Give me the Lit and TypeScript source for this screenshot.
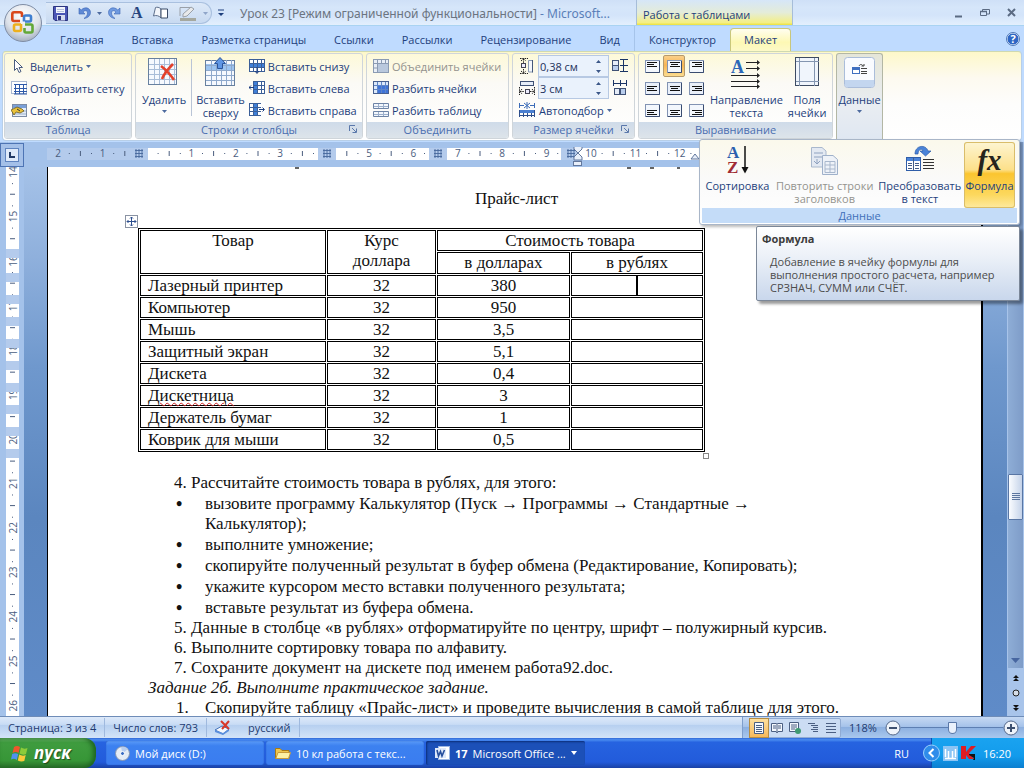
import { LitElement, html, css, svg } from "lit";
import { customElement, state } from "lit/decorators.js";

const cell = (x: number, y: number, w: number, h: number, f: string) =>
  svg`<rect x=${x} y=${y} width=${w} height=${h} fill=${f} />`;

const gridLines = (w: number, h: number, sx: number, sy: number, c: string) => {
  let d = "";
  for (let x = sx; x < w; x += sx) d += `M${x + 0.5} 0V${h}`;
  for (let y = sy; y < h; y += sy) d += `M0 ${y + 0.5}H${w}`;
  return svg`<path d=${d} stroke=${c} fill="none" />`;
};

const smallTable = (blue: unknown, extra: unknown = "", line = "#6f86a8") => html`
  <svg width="16" height="16" viewBox="0 0 16 16" aria-hidden="true">
    <rect x="0.5" y="1.5" width="15" height="12" fill="#fff" stroke=${line} />
    ${blue}
    <path d="M4.5 2V13M8.5 2V13M12.5 2V13M1 5.5H15M1 9.5H15" stroke=${line} fill="none" />
    ${extra}
  </svg>`;

const icons = {
  save: html`<svg width="15" height="15" viewBox="0 0 15 15" aria-hidden="true"><path d="M.5.5H14.5V14.5H2L.5 13Z" fill="#4a55b5" stroke="#2c3580"/><rect x="3" y="1" width="9" height="6" fill="#f2f5fc"/><path d="M4 3.500H11M4 5.500H11" stroke="#b6c0dc"/><rect x="4" y="9" width="8" height="5.500" fill="#d4daee"/><rect x="5" y="10" width="3" height="4" fill="#2c3580"/></svg>`,
  undo: html`<svg width="13" height="14" viewBox="0 0 13 14" aria-hidden="true"><path d="M1 2V8H7L5 6C7 3.800 9.500 4.500 9.500 7C9.500 9.500 8 11 6 12.500C10 12 12.500 9.500 12.500 6.500C12.500 2 7 0 3.200 4Z" fill="#5f8ad6" stroke="#3c64b4" stroke-width=".6"/></svg>`,
  redo: html`<svg width="13" height="14" viewBox="0 0 13 14" aria-hidden="true"><path d="M12 2V8H6L8 6C6 3.800 3.500 4.500 3.500 7C3.500 9.500 5 11 7 12.500C3 12 .5 9.500 .5 6.500C.5 2 6 0 9.800 4Z" fill="#6f9ae0" stroke="#3c64b4" stroke-width=".6"/></svg>`,
  book: html`<svg width="16" height="14" viewBox="0 0 16 14" aria-hidden="true"><path d="M8 3C6 1 4 1 2.500 1.500L.5 10C3 9 6 9.500 8 12Z" fill="#f2f5fa" stroke="#5d6f8c"/><path d="M8 3H14.500V12H8Z" fill="#fff" stroke="#3b4c68"/></svg>`,
  pen: html`<svg width="18" height="16" viewBox="0 0 18 16" aria-hidden="true"><path d="M1 2.500H11M1 2.500V11M4 9L12 2L15 4L8 11L4 12Z" fill="#e8e9ea" stroke="#9aa0a8"/><rect x="1" y="13" width="16" height="3" fill="#a5a89f"/></svg>`,
  cursor: html`<svg width="16" height="16" viewBox="0 0 16 16" aria-hidden="true"><path d="M3.500 1.500V12.500L6 10L8 14.500L10 13.500L8 9.500H11.500Z" fill="#fff" stroke="#4a5d80"/></svg>`,
  gridView: html`<svg width="16" height="14" viewBox="0 0 16 14" aria-hidden="true"><rect x=".5" y=".5" width="15" height="12" fill="#fff" stroke="#5674a8" stroke-dasharray="1 1"/><path d="M4.500 3V13M8.500 3V13M12.500 3V13M3 3.500H16M3 7.500H16M3 10.500H16M3 13H16" stroke="#2e59a8" fill="none"/></svg>`,
  props: html`<svg width="16" height="14" viewBox="0 0 16 14" aria-hidden="true"><rect x="1.500" y="1.500" width="14" height="12" fill="#e6eef8" stroke="#7c8ca6"/><rect x="2" y="2" width="13" height="3" fill="#7aa0d8"/><path d="M2 8H15M2 11H15" stroke="#9bb0cc"/><path d="M0 7L6 4L11 6L13 8L9 10L5 9L3 12Z" fill="#eac23a" stroke="#6a5a20" stroke-width=".8"/><path d="M6 6L9 8" stroke="#333"/></svg>`,
  remove: html`<svg width="32" height="30" viewBox="0 0 32 30" aria-hidden="true"><rect x=".5" y="1.500" width="28" height="26" fill="#f6f9fe" stroke="#67809f"/><g transform="translate(1 2)">${gridLines(27, 25, 5, 5, "#a9bdd8")}</g><path d="M13 9C17 12 22 17 26 23M25 7C20 12 16 17 14 22" stroke="#e2412c" stroke-width="2.600" fill="none"/></svg>`,
  insertAbove: html`<svg width="32" height="30" viewBox="0 0 32 30" aria-hidden="true"><rect x=".5" y="3.500" width="29" height="25" fill="#f6f9fe" stroke="#67809f"/><rect x="1" y="7" width="28" height="6" fill="#9cc4f0"/><g transform="translate(1 3)">${gridLines(28, 25, 5, 5, "#8fa9cc")}</g><path d="M15 .5L20.500 6.500H17.500V11.500H12.500V6.500H9.500Z" fill="#5f96e4" stroke="#2a559c"/></svg>`,
  below: smallTable(cell(1, 6, 14, 4, "#3f7fd8"), svg`<path d="M8 9V15M6 13L8 15.500L10 13" stroke="#1d3f80" fill="none"/>`, "#3b5f98"),
  left: smallTable(cell(5, 2, 4, 11, "#3f7fd8"), svg`<rect x="0" y="0" width="4" height="16" fill="#fdfcf6"/><path d="M5 7.500H0M2 5.500L0 7.500L2 9.500" stroke="#1d3f80" fill="none"/>`, "#3b5f98"),
  right: smallTable(cell(5, 2, 4, 11, "#3f7fd8"), svg`<rect x="12" y="0" width="4" height="16" fill="#fdfdfd"/><path d="M10 7.500H15M13.500 5.500L15.500 7.500L13.500 9.500" stroke="#1d3f80" fill="none"/>`, "#3b5f98"),
  merge: html`<svg width="16" height="14" viewBox="0 0 16 14" aria-hidden="true"><rect x=".5" y=".5" width="15" height="13" fill="#e8eef6" stroke="#8b9bb3"/><path d="M.5 4.500H15M4.500 .5V13M8.500 .5V4M12.500 .5V4M1 9H4" stroke="#8b9bb3"/><rect x="5" y="5" width="10" height="8" fill="#b9c8dd"/></svg>`,
  split: html`<svg width="16" height="14" viewBox="0 0 16 14" aria-hidden="true"><rect x=".5" y=".5" width="15" height="12" fill="#dce9fa" stroke="#476090"/><rect x="4" y="4" width="11" height="8" fill="#3f74d8"/><path d="M4.500 1V12M8.500 1V12M12.500 1V12M1 4.500H15M1 8.500H15" stroke="#5f86c8"/></svg>`,
  splitTable: html`<svg width="16" height="16" viewBox="0 0 16 16" aria-hidden="true"><path d="M.5 1.500H15.500V6.500H.5ZM.5 9.500H15.500V14.500H.5Z" fill="#f3f7fc" stroke="#6e84a6"/><path d="M5.500 2V6M10.500 2V6M5.500 10V14M10.500 10V14M1 4.500H15M1 12.500H15" stroke="#9db0cc"/></svg>`,
  rowH: html`<svg width="16" height="16" viewBox="0 0 16 16" aria-hidden="true"><path d="M1 .5H9M1 15.500H9M4.500 1V5M4.500 11V15M2 3L4.500 .8L7 3M2 13L4.500 15.200L7 13" stroke="#222" stroke-dasharray="1.500 .8" fill="none"/><rect x="2.500" y="5.500" width="4" height="4" fill="#eef" stroke="#445"/><path d="M9.500 2.500H13.500V14H9.500Z" fill="#f4f7fc" stroke="#8a9ab4"/><path d="M13.500 2V14.500" stroke="#44587a"/></svg>`,
  colW: html`<svg width="16" height="16" viewBox="0 0 16 16" aria-hidden="true"><rect x="1.500" y="1.500" width="13" height="4" fill="#e6edf8" stroke="#3f5175"/><path d="M.5 7V15M15.500 7V15M1 11.500H5M11 11.500H15M3 9L1 11.500L3 14M13 9L15 11.500L13 14" stroke="#222" stroke-dasharray="1.500 .8" fill="none"/><rect x="6.500" y="9.500" width="4" height="4" fill="#eef" stroke="#445"/></svg>`,
  distRows: html`<svg width="16" height="16" viewBox="0 0 16 16" aria-hidden="true"><rect x=".5" y="2.500" width="6" height="5" fill="#e6edf8" stroke="#3f5175"/><rect x=".5" y="7.500" width="6" height="5" fill="#b9cdec" stroke="#3f5175"/><path d="M8 1.500H16M8 7.500H16M8 13.500H16M11.500 1V14" stroke="#1b3566"/></svg>`,
  distCols: html`<svg width="16" height="16" viewBox="0 0 16 16" aria-hidden="true"><path d="M1.500 0V6M8.500 0V6M14.500 0V6M1 3.500H15" stroke="#1b3566"/><rect x="2.500" y="8.500" width="5" height="6" fill="#e6edf8" stroke="#3f5175"/><rect x="8.500" y="8.500" width="5" height="6" fill="#b9cdec" stroke="#3f5175"/></svg>`,
  autofit: html`<svg width="17" height="16" viewBox="0 0 17 16" aria-hidden="true"><path d="M.5 1V6M15.500 1V6M1 3.500H5M11 3.500H15M8 0V7M5 1L11 6M11 1L5 6" stroke="#3c6cb8" fill="none"/><rect x=".5" y="8" width="15" height="3" fill="#4b7fd0"/><path d="M.5 8V15M4.500 11V15M8.500 11V15M12.500 11V15M15.500 8V15M0 13.500H16" stroke="#2e4f8c"/></svg>`,
  direction: html`<svg width="32" height="32" viewBox="0 0 32 32" aria-hidden="true"><text x="1" y="16" font-family="Liberation Serif, serif" font-weight="bold" font-size="18" fill="#2b67b8">A</text><path d="M16 5.500H29M16 11.500H29M1 18.500H29M1 24.500H29M1 29.500H29" stroke="#222" fill="none"/><path d="M27 3L30 5.500L27 8ZM27 9L30 11.500L27 14ZM27 16L30 18.500L27 21ZM27 22L30 24.500L27 27ZM27 27L30 29.500L27 32Z" fill="#222"/></svg>`,
  margins: html`<svg width="25" height="30" viewBox="0 0 25 30" aria-hidden="true"><rect x=".5" y=".5" width="23" height="28" fill="#f0f5fc" stroke="#3d4b63"/><path d="M4.500 1V29M19.500 1V29M1 4.500H24M1 24.500H24" stroke="#8395b0"/></svg>`,
  data: html`<svg width="32" height="32" viewBox="0 0 32 32" aria-hidden="true"><rect x=".5" y=".5" width="30" height="30" rx="3" fill="#f9fbff" stroke="#aabdda"/><path d="M1 23H30V28Q30 30 28 30H3Q1 30 1 28Z" fill="#c3d6ef"/><rect x="8.500" y="10.500" width="7" height="6" fill="#fff" stroke="#3f6fc0"/><path d="M9 12H15" stroke="#3f6fc0" stroke-width="2"/><path d="M15 9C16 7 18 7 19 9M17.500 9H20V7M17 11.500H23M17 14.500H23M17 16.500H23" stroke="#444" fill="none"/></svg>`,
  sort: html`<svg width="24" height="32" viewBox="0 0 24 32" aria-hidden="true"><text x="1" y="15" font-family="Liberation Serif, serif" font-weight="bold" font-size="17" fill="#2b5fae">A</text><text x="1" y="30" font-family="Liberation Serif, serif" font-weight="bold" font-size="17" fill="#a02c34">Z</text><path d="M19 3V26" stroke="#111" stroke-width="1.500"/><path d="M15.500 24L19 30.500L22.500 24Z" fill="#111"/></svg>`,
  repeat: html`<svg width="30" height="33" viewBox="0 -3 30 33" aria-hidden="true"><path d="M1.500 1.500H12L16 5V21H1.500Z" fill="#e3e9f2" stroke="#a9b8cd"/><path d="M4 7H13M4 11H13M7 13V17M4 15L7 18L10 15" stroke="#8fa2bf" fill="none"/><path d="M12.500 9.500H23L27.500 13.500V28.500H12.500Z" fill="#eef2f8" stroke="#9fb1ca"/><path d="M15 15.500H25V26.500H15ZM15 19H25M15 23H25M20 16V26" stroke="#a9b8cd" fill="none"/></svg>`,
  convert: html`<svg width="30" height="30" viewBox="0 -2 30 30" aria-hidden="true"><path d="M10 9C10 0 21 -1 23 6H26L20.500 11L15 6H18C17 3 13 4 13 9Z" fill="#4a83d8" stroke="#2a5aa8" stroke-width=".7"/><rect x="1.500" y="12.500" width="14" height="13" fill="#fff" stroke="#2f5da8"/><path d="M2 13H15V16H2Z" fill="#4a83d8"/><path d="M3 18.500H7M3 20.500H7M3 23.500H7M10 18.500H14M10 20.500H14M10 23.500H14M8.500 13V25" stroke="#445d88"/><path d="M18 14.500H29M18 17.500H29M18 20.500H29M18 23.500H29" stroke="#333"/></svg>`,
  launcher: html`<svg width="8" height="8" viewBox="0 0 8 8" aria-hidden="true"><path d="M.5 6V.5H6M3 3L7 7M7.500 3.500V7.500H3.500" stroke="#5a78ab" fill="none"/></svg>`,
  caret: html`<svg width="5" height="3" viewBox="0 0 5 3" aria-hidden="true"><path d="M0 0H5L2.500 3Z" fill="#4d6a9e"/></svg>`,
};

const TABS = ["Главная", "Вставка", "Разметка страницы", "Ссылки", "Рассылки", "Рецензирование", "Вид"];

const ROWS = [
  ["Лазерный принтер", "380"],
  ["Компьютер", "950"],
  ["Мышь", "3,5"],
  ["Защитный экран", "5,1"],
  ["Дискета", "0,4"],
  ["Дискетница", "3"],
  ["Держатель бумаг", "1"],
  ["Коврик для мыши", "0,5"],
];

@customElement("app-root")
export class AppRoot extends LitElement {
  @state() private align = 1;

  static styles = css`
    :host {
      display: grid;
      grid-template-rows: 26px 25px 91px minmax(0, 1fr) 22px 30px;
      height: 100vh;
      position: relative;
      overflow: hidden;
      background: #bfdbff;
      color: #1e3f7c;
      font: 11px/13px "Open Sans", "Noto Sans", sans-serif;
    }
    * { box-sizing: border-box; }
    button {
      font: inherit; color: inherit; background: none; border: 0; padding: 0; margin: 0;
      display: flex; align-items: center; white-space: nowrap;
    }
    svg { display: block; flex: none; }

    .title {
      display: flex; align-items: stretch; padding-left: 46px;
      background: linear-gradient(#cfe0f7, #d6e6fa 30%, #d3e4fa 60%, #e3effd);
      border-bottom: 1px solid #a9d3f2;
    }
    .quick {
      display: flex; align-items: center; gap: 10px; height: 22px; margin-top: 2px; padding: 0 9px 0 7px;
      background: linear-gradient(#dde9f8, #c8daf1); border: 1px solid #a9c0df; border-left: 0;
      border-radius: 0 11px 11px 0; width: 166px; flex: none;
    }
    .quick .fontA { font: bold 16px/18px "Liberation Serif", serif; color: #27457e; }
    .quick .more { margin: 0 -4px; }
    .quick .dim { opacity: 0.5; }
    .qmenu { padding: 0 6px; }
    .caption { flex: 0 1 406px; font-family: "Noto Sans", sans-serif; font-size: 12px; line-height: 28px; color: #5a7fb8; white-space: nowrap; padding-left: 10px; }
    .caption span { color: #6b7480; }
    .context {
      width: 157px; padding-left: 6px; line-height: 29px; color: #1e3f7c;
      background: linear-gradient(#d6e6f8, #e4ecd9 50%, #f4ef86 90%, #ece13c);
      border-left: 1px solid #a6bdd9; border-right: 1px solid #a6bdd9;
      font-size: 11px; white-space: nowrap;
    }
    .winctl { margin-left: auto; display: flex; gap: 17px; padding-right: 8px; }
    .orb { position: absolute; left: 3px; top: 3px; z-index: 3; }

    .tabs { display: flex; padding-left: 46px; align-items: stretch; background: #bfdbff; }
    .tabs button { padding: 2px 14px 0; line-height: 20px; }
    .tabs .ctx { border-left: 1px solid #a6c4ea; }
    .tabs .on {
      margin-top: 2px; padding: 0 13px; border: 1px solid #c9c77c; border-bottom: 0; border-radius: 4px 4px 0 0;
      background: linear-gradient(#fffef0, #fdf8b4 60%, #fdf9c8);
    }
    .help { margin-left: auto; padding: 0 4px 0 0 !important; }

    .ribbon {
      display: grid; grid-template-columns: 128px 228px 143px 123px 195px 47px; gap: 3px;
      margin: 0 2px; padding: 1px; background: linear-gradient(#fdf8c9, #fdfaf0 30%, #fdfdfc 60%, #fff);
      border: 1px solid #b8cfe8; border-top-color: #cfd9b0; border-radius: 4px; height: 90px;
    }
    .group {
      display: grid; grid-template-rows: 68px 16px; border: 1px solid #cfd5da; border-radius: 3px; overflow: hidden; height: 86px;
      background: linear-gradient(#fdf9d8, #fbfaf6 35%, #fff);
    }
    .group footer {
      display: flex; align-items: center; justify-content: center; background: linear-gradient(#cfdbe9, #dde4ea);
      color: #4a6eb0; position: relative; white-space: nowrap; padding-bottom: 1px;
    }
    .group footer button { position: absolute; right: 5px; top: 3px; }
    .body { display: flex; padding: 1px 4px 0 6px; }
    .col { display: grid; grid-template-rows: repeat(3, 22px); }
    .col button { gap: 3px; }
    .col.after { margin-left: 4px; }
    .off { color: #94938e; }
    .big { flex-direction: column; text-align: center; padding-top: 2px; line-height: 13px; white-space: normal; }
    .big .pic { height: 35px; display: flex; align-items: flex-start; }
    .big .pic + span { padding-top: 1px; }
    .big .caret { padding-top: 4px; }
    .rule { width: 1px; margin: 4px 4px 6px 5px; background: #b9c4d6; }
    .size { display: grid; grid-template-columns: 16px 71px 16px; grid-template-rows: repeat(3, 22px); column-gap: 3px; align-items: center; }
    .size .fit { grid-column: 1 / 4; gap: 3px; }
    .spin { display: flex; height: 22px; border: 1px solid #b7c9e3; background: #eaf2fc; }
    .spin input { width: 52px; border: 0; background: none; font: inherit; color: #1a2f5a; padding: 0 0 0 1px; outline: 0; }
    .spin button { width: 15px; justify-content: center; }
    .aligns { display: grid; grid-template: repeat(3, 22px) / repeat(3, 22px); margin-left: -4px; }
    .aligns button { justify-content: center; }
    .aligns .on { background: linear-gradient(#fbd08a, #f7b553 45%, #fbdc8f); border: 1px solid #b59a6c; border-radius: 2px; }
    .pair { display: flex; gap: 5px; margin-left: 3px; }
    .data { border: 1px solid #b3b7a5; border-bottom: 0; border-radius: 3px 3px 0 0; background: linear-gradient(#e5e6d8, #e9edf2 60%, #dfe7f2); padding-top: 3px; height: 87px; }

    .menu {
      position: absolute; z-index: 4; top: 139px; right: 4px; width: 321px; height: 86px; padding: 2px;
      border: 1px solid #a9b6c8; border-radius: 3px; background: linear-gradient(#fbf9ec, #fafafa 50%, #fff);
      box-shadow: 2px 2px 3px #0004; display: grid; grid-template-rows: 66px 15px;
    }
    .items { display: grid; grid-template-columns: 71px 102px 87px 51px; justify-content: space-between; padding-right: 2px; }
    .items .big { padding-top: 1px; white-space: nowrap; }
    .items .on { background: linear-gradient(#fdf5d2, #fde08a 42%, #fbc530 48%, #fcd85e 80%, #feeaa0); box-shadow: inset 0 0 0 1px #d9bd6a; border-radius: 3px; }
    .fx { font: italic bold 29px/35px "Liberation Serif", serif; color: #26241c; }
    .menu footer { background: #c4dcf8; color: #3f6fb8; text-align: center; line-height: 15px; }
    .tip {
      position: absolute; z-index: 4; top: 226px; right: 4px; width: 264px; height: 75px; padding: 5px;
      border: 1px solid #7b8798; border-radius: 2px; background: linear-gradient(#fff, #ecf1f8 40%, #c9d7ec); color: #4c4c4c;
      box-shadow: 3px 3px 3px #0006;
    }
    .tip b { display: block; color: #3c3c3c; margin-bottom: 10px; line-height: 13px; }
    .tip p { margin: 0 0 0 8px; white-space: nowrap; }

    .work { display: grid; grid-template-columns: 24px minmax(0, 1fr) 17px; background: #a4c2ea; overflow: hidden; }
    .vr { background: #a4c2ea; }
    .tabsel { display: flex; width: 24px; height: 24px; border: 1px solid #4d74b4; background: #a4c0e8; align-items: center; justify-content: center; margin-top: 1px; }
    .tabsel span { width: 14px; height: 14px; border: 1px solid #5f84bf; background: #dfeafa; display: grid; place-items: center; }
    .main { display: grid; grid-template-rows: 25px minmax(0, 1fr); }
    .hr { padding: 5px 0 0 23px; background: #a4c2ea; overflow: hidden; }
    .desk { padding: 0 24px 0 23px; background: linear-gradient(#a5c2e8 0, #8fb0dc 90px, #6f98cd 200px, #5b86bf 350px, #5f8bc8 100%); overflow: hidden; }
    .page { position: relative; background: #fff; border: solid #000; border-width: 0 2px 0 1px; height: 100%; color: #111; font: 17px/20px "Liberation Serif", serif; padding-top: 22px; overflow: hidden; }
    .marks { position: absolute; top: 0; left: 0; }
    h1 { font: inherit; text-align: center; margin: 0 0 19px; padding-left: 4px; }
    table { margin-left: 90px; width: 567px; table-layout: fixed; border: 1px solid #000; border-collapse: separate; border-spacing: 1px; }
    th, td { border: 1px solid #000; font-weight: normal; padding: 0 7px; text-align: center; height: 21px; line-height: 19px; vertical-align: top; }
    .r1 th { line-height: 19px; }
    .r1 th[rowspan] { line-height: 20px; }
    .r2 th { line-height: 20px; }
    .name { text-align: left; }
    .bad { text-decoration: underline wavy #c22 1px; text-underline-offset: 1px; }
    .caret-bar { display: inline-block; width: 2px; height: 19px; background: #000; vertical-align: top; }
    .handle { position: absolute; left: 77px; top: 48px; }
    .corner { position: absolute; left: 655px; top: 286px; width: 6px; height: 6px; border: 1px solid #888; background: #fff; }
    .doc { margin: 21px 0 0 100px; }
    .doc p { margin: 0; white-space: nowrap; }
    .in { padding-left: 26px; }
    ul, ol { list-style: none; margin: 0; padding: 0; }
    li { display: grid; grid-template-columns: 29px 1fr; padding-left: 28px; white-space: nowrap; }
    ul li { margin-top: 1px; }
    .dot { font-size: 18px; font-weight: bold; }

    .scroll { background: #a8c4ea; display: grid; grid-template-rows: 332px 46px 1fr 50px; padding: 0 1px; }
    .track { background: linear-gradient(90deg, #8eadd6, #7e9cc8); display: flex; justify-content: center; align-items: flex-end; padding-bottom: 5px; }
    .thumb { background: linear-gradient(90deg, #fafcff, #c5d3e9); border: 1px solid #5976a4; border-radius: 1px; justify-content: center; }
    .browse { display: grid; justify-items: center; align-content: space-evenly; }

    .status {
      display: flex; align-items: center; background: linear-gradient(#dde9f9, #c9dcf5 35%, #b7d0f0 40%, #d3e4f8);
      border-top: 1px solid #6e8cb8; color: #1e3b70; white-space: nowrap;
    }
    .status > span { padding: 0 8px; border-right: 1px solid #9fb9de; line-height: 19px; }
    .status .proof { display: flex; align-items: center; gap: 17px; height: 19px; }
    .right { margin-left: auto; align-self: stretch; width: 282px; display: flex; align-items: center; padding-left: 6px; background: linear-gradient(#c6d9f3, #a6c3ea 45%, #8db0e0 50%, #a9c8ee); border-left: 1px solid #7f9ecb; }
    .views { display: flex; border: 1px solid #90abd3; border-radius: 2px; background: #cbdcf3; }
    .views button { width: 18px; height: 18px; justify-content: center; }
    .views .on { background: linear-gradient(#fde0a0, #f7b95a); box-shadow: 0 0 0 1px #b58d45; }
    .pct { margin: 0 8px; width: 28px; }
    input[type="range"] { appearance: none; width: 102px; height: 16px; margin: 0; background: linear-gradient(#5d7fb2, #5d7fb2) center / 100% 1px no-repeat; }
    input[type="range"]::-webkit-slider-thumb { appearance: none; width: 9px; height: 12px; border: 1px solid #5a78a8; background: #e9f1fc; border-radius: 1px 1px 5px 5px; }

    .task { display: flex; align-items: stretch; gap: 2px; background: linear-gradient(#3168d5, #4a8cf0 6%, #2663e0 14%, #225bdb 80%, #1941a5); color: #fff; }
    .start { width: 96px; margin-right: 8px; padding-left: 11px; gap: 6px; font: italic bold 17px/28px "Open Sans", sans-serif; text-shadow: 1px 1px 1px #0007; border-radius: 0 12px 12px 0; background: linear-gradient(#6db56b, #3f9c3f 15%, #379637 75%, #2a6f2a); box-shadow: inset -3px 0 5px #1d6320; }
    .app { flex: 0 0 158px; margin: 3px 0; padding: 0 8px 0 9px; gap: 5px; border-radius: 2px; background: linear-gradient(#5a9af8, #3c81f0 20%, #3a7cf0); box-shadow: inset 0 0 1px #16409b; }
    .app.on { background: #1c50b8; box-shadow: inset 1px 1px 2px #0b2d78; }
    .app svg:last-child:not(:first-child) { margin-left: auto; }
    .lang { margin-left: auto; margin-right: 20px; align-self: center; }
    .tray { display: flex; align-items: center; gap: 3px; width: 93px; background: linear-gradient(#1aa3f0, #129bec 60%, #0c7fd0); border-left: 1px solid #0c4fb0; }
    .tray time { margin-left: 4px; }
    .tray button { margin-left: -9px; }
  `;

  private big(icon: unknown, label: unknown, caret = false, cls = "") {
    return html`<button class="big ${cls}"><span class="pic">${icon}</span><span>${label}</span>${caret ? html`<span class="caret">${icons.caret}</span>` : ""}</button>`;
  }

  private row(icon: unknown, label: string, caret = false, off = false) {
    return html`<button class=${off ? "off" : ""}>${icon}<span>${label}</span>${caret ? icons.caret : ""}</button>`;
  }

  private alignIcon(i: number) {
    const h = i % 3, v = Math.floor(i / 3);
    const y = 2 + v * 2;
    const w = [10, 7, 10];
    return html`<svg width="15" height="13" viewBox="0 0 15 13" aria-hidden="true">
      <rect x=".5" y=".5" width="14" height="12" fill=${v === 1 ? "#e9eff9" : "#f3f7fd"} stroke="#8293b3" />
      <path d="M1 12.500H14.500V1" stroke="#3a4c70" fill="none" />
      ${w.map((n, k) => {
        const x = h === 0 ? 2 : h === 1 ? (15 - n) / 2 : 13 - n;
        return svg`<rect x=${Math.round(x)} y=${y + k * 2} width=${n} height="1" fill="#111" />`;
      })}
    </svg>`;
  }

  private hash(x: number) {
    return svg`<path d="M${x - 3} 2V11M${x} 2V11M${x + 3} 2V11M${x - 4} 3.500H${x + 4}M${x - 4} 6.500H${x + 4}M${x - 4} 9.500H${x + 4}" stroke="#46689c" stroke-width=".9" />`;
  }

  private horizontalRuler() {
    const unit = 44.4, zero = 100;
    const marks = [];
    const blocked = [92, 280, 391, 524];
    for (let q = -8; q <= 78; q++) {
      const x = zero + (q * unit) / 4;
      if (x < 6 || blocked.some((b) => Math.abs(b - x) < 10)) continue;
      if (q % 4 === 0) marks.push(svg`<text x=${x} y="10" text-anchor="middle">${Math.abs(q / 4)}</text>`);
      else if (q % 2 === 0) marks.push(svg`<path d="M${x} 4V9" stroke="#4a5d7e" />`);
      else marks.push(svg`<rect x=${x - 0.5} y="6" width="1" height="1" fill="#4a5d7e" />`);
    }
    return html`<svg width="100%" height="20" font-size="10" font-family="Open Sans, sans-serif" fill="#4a5d7e" aria-hidden="true">
      <rect width="100%" height="12" y="1" fill="#fff" />
      <rect width="101" height="12" y="1" fill="#b4cbec" />
      ${[271, 382, 514].map((x) => svg`<rect x=${x} y="1" width="18" height="12" fill="#b4cbec" />`)}
      ${blocked.map((x) => this.hash(x))}
      ${marks}
      <path d="M527 -2H535V2L531 6L535 10V13H527V10L531 6L527 2Z" fill="#e8effa" stroke="#62779c" />
      <rect x="526.500" y="14.500" width="8" height="4" fill="#e8effa" stroke="#62779c" />
      <path d="M644 12L648 7L652 12Z" fill="#e8effa" stroke="#62779c" />
    </svg>`;
  }

  private verticalRuler() {
    const marks = [];
    for (let q = 0; q < 50; q++) {
      const y = 5 + q * 11.12;
      const n = 14 + q / 4;
      if (q % 4 === 0) marks.push(svg`<text transform="translate(17 ${y}) rotate(-90)" text-anchor="middle">${n}</text>`);
      else if (q % 2 === 0) marks.push(svg`<path d="M10 ${y}H15" stroke="#4a5d7e" />`);
      else marks.push(svg`<rect x="12" y=${y} width="1" height="1" fill="#4a5d7e" />`);
    }
    return html`<svg width="24" height="550" font-size="10" font-family="Open Sans, sans-serif" fill="#4a5d7e" aria-hidden="true">
      <rect x="6" width="13" height="550" fill="#fff" />
      ${marks}
      ${[82, 106, 128, 150, 172, 194, 216, 238, 260, 282].map((y) => svg`<rect x="6" y=${y} width="13" height="9" fill="#b4cbec" />`)}
    </svg>`;
  }

  render() {
    return html`
      <svg class="orb" width="40" height="40" viewBox="0 0 40 40" aria-hidden="true">
        <defs><radialGradient id="o" cx=".5" cy=".3" r=".75"><stop offset="0" stop-color="#fff" /><stop offset=".6" stop-color="#dde2ea" /><stop offset="1" stop-color="#9aa6b8" /></radialGradient></defs>
        <circle cx="20" cy="20" r="18.500" fill="url(#o)" stroke="#7f8da5" />
        <g fill="none" stroke-width="2.600">
          <path d="M17 18H11Q9.300 18 9.300 16V11Q9.300 9.300 11 9.300H17Q19 9.300 19 11V14" stroke="#d9481c" />
          <path d="M21 18.500V14Q21 12.500 22.500 12.500H26.500Q28 12.500 28 14V17Q28 18.500 26.500 18.500H22" stroke="#3f7fd0" />
          <path d="M18 21V26.500Q18 28 16.500 28H12.500Q11 28 11 26.500V23Q11 21.500 12.500 21.500H18" stroke="#edb01d" />
          <path d="M21.500 25V28Q21.500 29.500 23 29.500H28Q29.500 29.500 29.500 28V23Q29.500 21.500 28 21.500H22" stroke="#62a838" />
        </g>
      </svg>

      <header class="title">
        <div class="quick">
          <button aria-label="Сохранить">${icons.save}</button>
          <button aria-label="Отменить">${icons.undo}</button>
          <span class="more">${icons.caret}</span>
          <button aria-label="Повторить">${icons.redo}</button>
          <button class="fontA">A</button>
          <button aria-label="Справочник">${icons.book}</button>
          <button aria-label="Перо">${icons.pen}</button>
          <span class="more dim">${icons.caret}</span>
        </div>
        <button class="qmenu" aria-label="Настройка"><svg width="6" height="8" viewBox="0 0 6 8"><path d="M0 1H6" stroke="#1e3f7c" /><path d="M0 4H6L3 7Z" fill="#1e3f7c" /></svg></button>
        <div class="caption"><span>Урок 23 [Режим ограниченной функциональности]</span> - Microsoft...</div>
        <div class="context">Работа с таблицами</div>
        <div class="winctl">
          <button aria-label="Свернуть"><svg width="8" height="10"><path d="M0 8.500H7" stroke="#5b6b83" stroke-width="2" /></svg></button>
          <button aria-label="Восстановить"><svg width="10" height="8"><path d="M.5 2.500H6.500V6.500H.5ZM2.500 2V.5H9.500V5H7" fill="none" stroke="#5b6b83" /><path d="M0 2.500H7" stroke="#5b6b83" stroke-width="1.500" /></svg></button>
          <button aria-label="Закрыть"><svg width="9" height="9"><path d="M1 1L8 8M8 1L1 8" stroke="#5b6b83" stroke-width="2" /></svg></button>
        </div>
      </header>

      <nav class="tabs">
        ${TABS.map((t) => html`<button>${t}</button>`)}
        <button class="ctx">Конструктор</button>
        <button class="on">Макет</button>
        <button class="help" aria-label="Справка"><svg width="14" height="14" viewBox="0 0 14 14"><circle cx="7" cy="7" r="6" fill="#2f66c4" stroke="#e6effb" /><circle cx="7" cy="7" r="6.500" fill="none" stroke="#4f78b8" /><text x="7" y="11" text-anchor="middle" font-size="11" font-weight="bold" fill="#fff">?</text></svg></button>
      </nav>

      <section class="ribbon">
        <div class="group">
          <div class="body"><div class="col">
            ${this.row(icons.cursor, "Выделить", true)} ${this.row(icons.gridView, "Отобразить сетку")} ${this.row(icons.props, "Свойства")}
          </div></div>
          <footer>Таблица</footer>
        </div>
        <div class="group">
          <div class="body">
            ${this.big(icons.remove, "Удалить", true)}
            <div class="rule"></div>
            ${this.big(icons.insertAbove, html`Вставить<br />сверху`)}
            <div class="col after">
              ${this.row(icons.below, "Вставить снизу")} ${this.row(icons.left, "Вставить слева")} ${this.row(icons.right, "Вставить справа")}
            </div>
          </div>
          <footer>Строки и столбцы<button aria-label="Параметры">${icons.launcher}</button></footer>
        </div>
        <div class="group">
          <div class="body"><div class="col">
            ${this.row(icons.merge, "Объединить ячейки", false, true)} ${this.row(icons.split, "Разбить ячейки")} ${this.row(icons.splitTable, "Разбить таблицу")}
          </div></div>
          <footer>Объединить</footer>
        </div>
        <div class="group">
          <div class="body"><div class="size">
            ${icons.rowH}
            <span class="spin"><input aria-label="Высота" value="0,38 см" />${this.spinner()}</span>
            ${icons.distRows} ${icons.colW}
            <span class="spin"><input aria-label="Ширина" value="3 см" />${this.spinner()}</span>
            ${icons.distCols}
            <button class="fit">${icons.autofit}<span>Автоподбор</span>${icons.caret}</button>
          </div></div>
          <footer>Размер ячейки<button aria-label="Параметры">${icons.launcher}</button></footer>
        </div>
        <div class="group">
          <div class="body">
            <div class="aligns">
              ${Array.from({ length: 9 }, (_, i) => html`<button aria-label="Выравнивание ${i + 1}" class=${this.align === i ? "on" : ""} @click=${() => (this.align = i)}>${this.alignIcon(i)}</button>`)}
            </div>
            <div class="pair">
              ${this.big(icons.direction, html`Направление<br />текста`)} ${this.big(icons.margins, html`Поля<br />ячейки`)}
            </div>
          </div>
          <footer>Выравнивание</footer>
        </div>
        <button class="big data"><span class="pic">${icons.data}</span><span>Данные</span><span class="caret">${icons.caret}</span></button>
      </section>

      <section class="menu">
        <div class="items">
          ${this.big(icons.sort, "Сортировка")}
          ${this.big(icons.repeat, html`Повторить строки<br />заголовков`, false, "off")}
          ${this.big(icons.convert, html`Преобразовать<br />в текст`)}
          ${this.big(html`<span class="fx">fx</span>`, "Формула", false, "on")}
        </div>
        <footer>Данные</footer>
      </section>
      <aside class="tip" role="tooltip">
        <b>Формула</b>
        <p>Добавление в ячейку формулы для<br />выполнения простого расчета, например<br />СРЗНАЧ, СУММ или СЧЁТ.</p>
      </aside>

      <main class="work">
        <div class="vr">
          <button class="tabsel" aria-label="Табуляция"><span><svg width="6" height="6"><path d="M1 0V5H6" stroke="#223a66" stroke-width="2" fill="none" /></svg></span></button>
          ${this.verticalRuler()}
        </div>
        <div class="main">
          <div class="hr">${this.horizontalRuler()}</div>
          <div class="desk">
            <article class="page">
              <svg class="marks" width="100%" height="3" aria-hidden="true"><path d="M247 1H251M579 1H583M602 1H606M629 1H632" stroke="#333" stroke-width="1.500" /></svg>
              <svg class="handle" width="13" height="13" viewBox="0 0 13 13" aria-hidden="true"><rect x=".5" y=".5" width="12" height="12" fill="#fff" stroke="#8a93a3" /><path d="M6.500 2V11M2 6.500H11M5 3.500L6.500 2L8 3.500M5 9.500L6.500 11L8 9.500M3.500 5L2 6.500L3.500 8M9.500 5L11 6.500L9.500 8" stroke="#2d4f8f" fill="none" /></svg>
              <h1>Прайс-лист</h1>
              <table>
                <colgroup><col style="width:186px" /><col style="width:109px" /><col style="width:133px" /><col /></colgroup>
                <thead>
                  <tr class="r1"><th rowspan="2">Товар</th><th rowspan="2">Курс<br />доллара</th><th colspan="2">Стоимость товара</th></tr>
                  <tr class="r2"><th>в долларах</th><th>в рублях</th></tr>
                </thead>
                <tbody>
                  ${ROWS.map(([name, price], i) => html`<tr>
                    <td class="name"><span class=${name === "Дискетница" ? "bad" : ""}>${name}</span></td><td>32</td><td>${price}</td>
                    <td>${i === 0 ? html`<span class="caret-bar"></span>` : ""}</td>
                  </tr>`)}
                </tbody>
              </table>
              <span class="corner"></span>
              <div class="doc">
                <p class="in">4. Рассчитайте стоимость товара в рублях, для этого:</p>
                <ul>
                  <li><span class="dot">•</span><span>вызовите программу Калькулятор (Пуск → Программы → Стандартные →<br />Калькулятор);</span></li>
                  <li><span class="dot">•</span><span>выполните умножение;</span></li>
                  <li><span class="dot">•</span><span>скопируйте полученный результат в буфер обмена (Редактирование, Копировать);</span></li>
                  <li><span class="dot">•</span><span>укажите курсором место вставки полученного результата;</span></li>
                  <li><span class="dot">•</span><span>вставьте результат из буфера обмена.</span></li>
                </ul>
                <p class="in">5. Данные в столбце «в рублях» отформатируйте по центру, шрифт – полужирный курсив.</p>
                <p class="in">6. Выполните сортировку товара по алфавиту.</p>
                <p class="in">7. Сохраните документ на дискете под именем работа92.doc.</p>
                <p><i>Задание 2б. Выполните практическое задание.</i></p>
                <ol><li><span>1.</span><span>Скопируйте таблицу «Прайс-лист» и проведите вычисления в самой таблице для этого.</span></li></ol>
              </div>
            </article>
          </div>
        </div>
        <div class="scroll">
          <div class="track"></div>
          <button class="thumb" aria-label="Прокрутка"><svg width="8" height="8"><path d="M0 .5H8M0 2.500H8M0 4.500H8M0 6.500H8" stroke="#5c76a0" /></svg></button>
          <div class="track"><svg width="9" height="5"><path d="M0 0H9L4.500 5Z" fill="#4766a0" /></svg></div>
          <div class="browse">
            <svg width="6" height="7"><path d="M3 0L6 3H0ZM3 3L6 6H0Z" fill="#111" /></svg>
            <svg width="8" height="8"><circle cx="4" cy="4" r="3" fill="#d5dde8" stroke="#222" /></svg>
            <svg width="6" height="7"><path d="M3 7L6 4H0ZM3 4L6 1H0Z" fill="#111" /></svg>
          </div>
        </div>
      </main>

      <footer class="status">
        <span>Страница: 3 из 4</span>
        <span>Число слов: 793</span>
        <span class="proof"><svg width="16" height="15" viewBox="0 0 16 15"><path d="M0 10L7 6L14 9L8 14Z" fill="#f5f8fc" stroke="#3f6fb8" /><path d="M0 10V12L8 15L14 11V9L8 13Z" fill="#5b8fdc" /><path d="M6 1L14 9M14 1L7 9" stroke="#d8382a" stroke-width="2" /></svg>русский</span>
        <div class="right">
          <div class="views">
            ${[0, 1, 2, 3, 4].map((i) => html`<button class=${i === 0 ? "on" : ""} aria-label="Режим ${i + 1}">${this.viewIcon(i)}</button>`)}
          </div>
          <button class="pct">118%</button>
          ${this.zoomButton("Уменьшить", false)}
          <input type="range" min="0" max="100" value="50" aria-label="Масштаб" />
          ${this.zoomButton("Увеличить", true)}
        </div>
      </footer>

      <footer class="task">
        <button class="start"><svg width="17" height="17" viewBox="0 0 17 17"><path d="M3 2Q6 0 9 2L7.500 8Q5 6 1.500 8Z" fill="#f0562c" /><path d="M10 2.500Q13 4.500 16.500 3L15 9Q12 10.500 8.500 8.500Z" fill="#8ccb3a" /><path d="M1.200 9Q4 7.500 7.200 9L5.800 15Q3 13 0 14.500Z" fill="#4f92f0" /><path d="M8.200 9.500Q11.500 11.500 14.700 10L13.300 16Q10 17 6.800 15.500Z" fill="#fbc93a" /></svg>пуск</button>
        <button class="app"><svg width="15" height="15"><circle cx="7.500" cy="7.500" r="7" fill="#e4ecf6" stroke="#8193b2" /><path d="M7.500 7.500L13 3A7 7 0 0 0 6 1Z" fill="#b6cdf0" /><circle cx="7.500" cy="7.500" r="2" fill="#3c6ec4" stroke="#fff" /></svg>Мой диск (D:)</button>
        <button class="app"><svg width="16" height="14" viewBox="0 0 16 14"><path d="M.5 2.500H5L7 4.500H14V12.500H.5Z" fill="#f0c64c" stroke="#a87a14" /><path d="M3 6.500H15.500L13.500 12.500H.8Z" fill="#fdf0a4" stroke="#c89a3a" /></svg>10 кл работа с текс...</button>
        <button class="app on"><svg width="15" height="14" viewBox="0 0 15 14"><rect x="3.500" y=".5" width="11" height="13" fill="#fff" stroke="#9db7e4" /><rect x="0" y="2" width="11" height="10" fill="#dfe9fa" /><path d="M2 4L3.500 10L5.500 5.500L7 10L9.500 4" stroke="#274f9c" stroke-width="1.600" fill="none" /></svg><b>17</b>Microsoft Office ...<svg width="6" height="4"><path d="M0 0H6L3 4Z" fill="#fff" /></svg></button>
        <span class="lang">RU</span>
        <div class="tray">
          <button aria-label="Показать значки"><svg width="17" height="18"><circle cx="8.500" cy="9" r="8" fill="#2f8cea" stroke="#9cd0fb" /><path d="M10.500 5L6.500 9L10.500 13" stroke="#fff" stroke-width="2" fill="none" /></svg></button>
          <svg width="15" height="15"><rect width="15" height="15" fill="#8cc4f4" /><path d="M2.500 3V11M5.500 5V12M9.500 5V12M12.500 3V11M2 12.500H13" stroke="#fff" stroke-width="1.500" /></svg>
          <svg width="15" height="15"><path d="M0 0H5V6L10 0H15L8 7L13 13H8L5 9V13H0Z" fill="#e01c24" /><path d="M8 8H14V14H12L13 12L8 9Z" fill="#111" /></svg>
          <time>16:20</time>
        </div>
      </footer>
    `;
  }

  private spinner() {
    return html`<button aria-label="Изменить"><svg width="5" height="13" viewBox="0 0 5 13"><path d="M0 3H5L2.500 0ZM0 10H5L2.500 13Z" fill="#3b5788" /></svg></button>`;
  }

  private zoomButton(label: string, plus: boolean) {
    return html`<button aria-label=${label}><svg width="16" height="16"><circle cx="8" cy="8" r="7" fill="#eef3fa" stroke="#55698c" /><path d=${plus ? "M4 8H12M8 4V12" : "M4 8H12"} stroke="#3d5070" stroke-width="2" /></svg></button>`;
  }

  private viewIcon(i: number) {
    const d = [
      "M1.500 .5H10.500V11.500H1.500ZM3 3.500H9M3 5.500H9M3 7.500H9M3 9.500H9",
      "M.5 1.500H5.500L6 2L6.500 1.500H11.500V9.500H7L6 11L5 9.500H.5ZM6 2V10M2 4H5M2 6H5M7 4H10M7 6H10",
      "M.5 .5H9.500V9.500H.5ZM2 3H8M2 5H8M2 7H6",
      "M1 1.500H8M4 3.500H11M6 5.500H11M4 7.500H11M6 9.500H11",
      "M1 1.500H11M1 4.500H11M1 7.500H11M1 10.500H11",
    ][i];
    return html`<svg width="12" height="12"><path d=${d} fill=${i < 3 ? "#f4f8fd" : "none"} stroke="#4b5f82" />${i === 2 ? svg`<circle cx="9" cy="9" r="3" fill="#3f9a72" />` : ""}</svg>`;
  }
}
